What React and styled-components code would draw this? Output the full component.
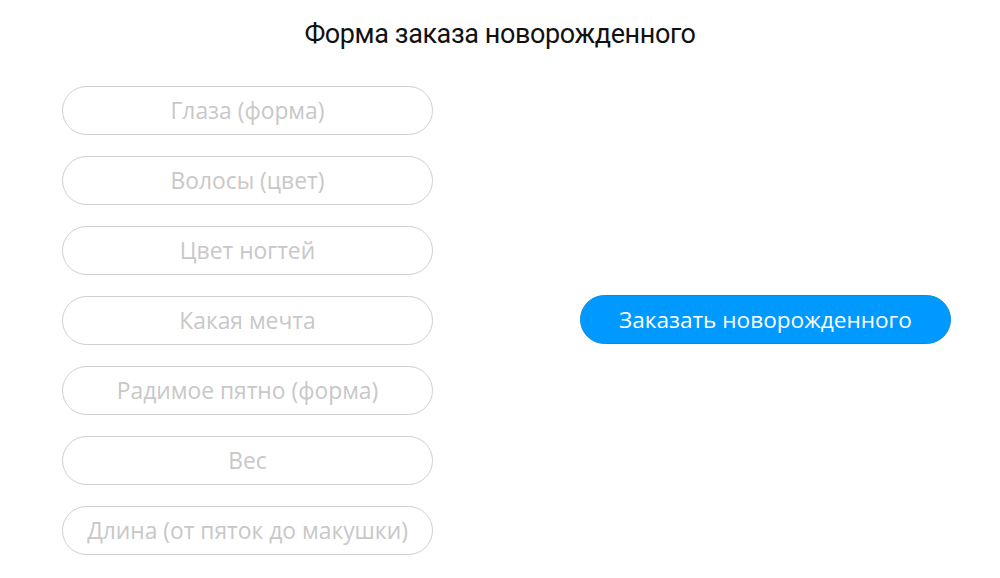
import React from "react";
import styled, { createGlobalStyle } from "styled-components";

const Global = createGlobalStyle`
  html, body { margin: 0; padding: 0; background: #fff; }
  * { box-sizing: border-box; }
`;

const Page = styled.div`
  width: 1000px;
  height: 578px;
  display: flex;
  flex-direction: column;
`;

const Title = styled.h1`
  margin: 18px 0 0;
  height: 33px;
  text-align: center;
  font-family: Roboto, "Liberation Sans", sans-serif;
  font-weight: 400;
  font-size: 27px;
  line-height: 33px;
  letter-spacing: -0.4px;
  color: #111;
`;

const Main = styled.div`
  display: flex;
  align-items: center;
  margin-top: 35px;
  padding-left: 62px;
`;

const Fields = styled.div`
  display: flex;
  flex-direction: column;
  gap: 21px;
`;

const Field = styled.input`
  width: 371px;
  height: 49px;
  padding: 0 8px;
  border: 1px solid #cfcfcf;
  border-radius: 25px;
  text-align: center;
  font-family: "Open Sans", "Noto Sans", sans-serif;
  font-size: 22.8px;
  color: #333;
  outline: none;
  background: #fff;
  &::placeholder { color: #c8c8c8; }
`;

const Submit = styled.button`
  margin-left: 147px;
  margin-top: -2px;
  width: 371px;
  height: 49px;
  border: 1px solid #0a8ae0;
  border-radius: 25px;
  background: #0099ff;
  color: #fff;
  font-family: "Open Sans", "Noto Sans", sans-serif;
  font-size: 22.6px;
  cursor: pointer;
`;

const fields = [
  "Глаза (форма)",
  "Волосы (цвет)",
  "Цвет ногтей",
  "Какая мечта",
  "Радимое пятно (форма)",
  "Вес",
  "Длина (от пяток до макушки)",
];

export default function App() {
  return (
    <Page>
      <Global />
      <Title>Форма заказа новорожденного</Title>
      <Main>
        <Fields>
          {fields.map((f) => (
            <Field key={f} placeholder={f} />
          ))}
        </Fields>
        <Submit>Заказать новорожденного</Submit>
      </Main>
    </Page>
  );
}
